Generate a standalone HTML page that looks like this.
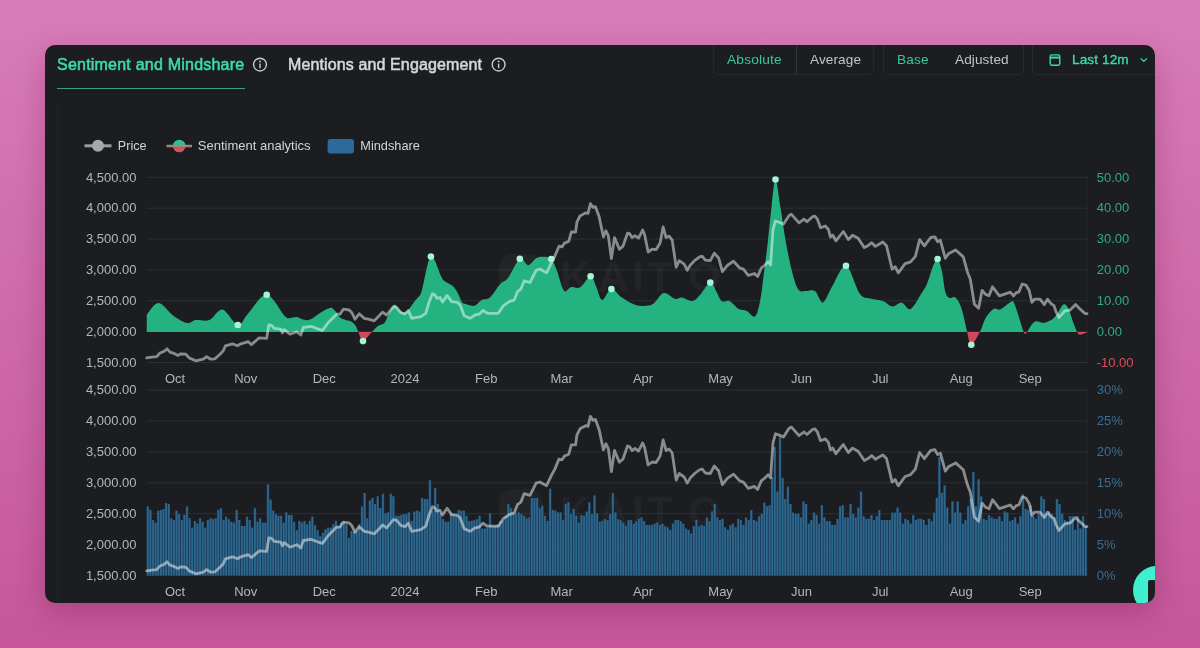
<!DOCTYPE html>
<html><head><meta charset="utf-8">
<style>
html,body{margin:0;padding:0;}
body{width:1200px;height:648px;overflow:hidden;position:relative;background:linear-gradient(180deg,#d87cb8 0%,#c5579a 100%);font-family:"Liberation Sans",sans-serif;}
.card{position:absolute;left:45px;top:45px;width:1110px;height:558px;background:#1b1d21;border-radius:10px;overflow:hidden;box-shadow:0 10px 30px rgba(90,0,50,0.25);}
.abs{position:absolute;white-space:nowrap;}
.card{will-change:transform}
</style></head><body>
<div class="card">
  <div class="abs" style="left:12px;top:61px;width:1px;height:497px;background:#212429"></div>
  <div class="abs" style="left:12px;top:10.5px;font-size:16px;font-weight:normal;color:#3ddba6;letter-spacing:0.22px;-webkit-text-stroke:0.55px #3ddba6">Sentiment and Mindshare</div>
  <div class="abs" style="left:12px;top:43px;width:188px;height:1px;background:#3a9f87"></div>
  <div class="abs" style="left:243px;top:10.5px;font-size:16px;font-weight:normal;color:#d6d7da;letter-spacing:0.12px;-webkit-text-stroke:0.55px #d6d7da">Mentions and Engagement</div>
  <div class="abs" style="left:668px;top:-6px;width:161px;height:36px;border:1px solid #26292d;border-radius:5px;box-sizing:border-box"></div>
  <div class="abs" style="left:751px;top:-6px;width:1px;height:36px;background:#34373c"></div>
  <div class="abs" style="left:682px;top:6.8px;font-size:13.7px;color:#36c99a;letter-spacing:0.2px">Absolute</div>
  <div class="abs" style="left:765px;top:6.8px;font-size:13.6px;color:#c2c4c8;letter-spacing:0.1px">Average</div>
  <div class="abs" style="left:838px;top:-6px;width:141px;height:36px;border:1px solid #26292d;border-radius:5px;box-sizing:border-box"></div>
  <div class="abs" style="left:852px;top:6.8px;font-size:13.6px;color:#36c99a;letter-spacing:0.2px">Base</div>
  <div class="abs" style="left:910px;top:6.8px;font-size:13.6px;color:#c2c4c8;letter-spacing:0.1px">Adjusted</div>
  <div class="abs" style="left:987px;top:-6px;width:140px;height:36px;border:1px solid #26292d;border-radius:5px;box-sizing:border-box"></div>
  <div class="abs" style="left:1027px;top:6.8px;font-size:13.6px;color:#3ddba6;letter-spacing:0.1px;-webkit-text-stroke:0.35px #3ddba6">Last 12m</div>
</div>
<div style="position:absolute;left:1133px;top:566px;width:22px;height:37px;overflow:hidden;border-bottom-right-radius:10px">
  <div style="position:absolute;left:0;top:0;width:48px;height:48px;border-radius:50%;background:#3ff0d0"></div>
  <div style="position:absolute;left:15px;top:14px;width:8px;height:24px;background:#1c1e22;border-radius:2px"></div>
</div>
<svg width="1200" height="648" viewBox="0 0 1200 648" style="position:absolute;left:0;top:0;will-change:transform">
<defs>
<clipPath id="cAbove"><rect x="146.5" y="100" width="940.5" height="232.0"/></clipPath>
<clipPath id="cBelow"><rect x="146.5" y="332.0" width="940.5" height="40"/></clipPath>
</defs>
<line x1="146.5" y1="177.3" x2="1088.0" y2="177.3" stroke="#2c2f35" stroke-width="1"/>
<line x1="146.5" y1="208.2" x2="1088.0" y2="208.2" stroke="#2c2f35" stroke-width="1"/>
<line x1="146.5" y1="239.0" x2="1088.0" y2="239.0" stroke="#2c2f35" stroke-width="1"/>
<line x1="146.5" y1="269.9" x2="1088.0" y2="269.9" stroke="#2c2f35" stroke-width="1"/>
<line x1="146.5" y1="300.8" x2="1088.0" y2="300.8" stroke="#2c2f35" stroke-width="1"/>
<line x1="146.5" y1="331.6" x2="1088.0" y2="331.6" stroke="#2c2f35" stroke-width="1"/>
<line x1="146.5" y1="362.5" x2="1088.0" y2="362.5" stroke="#2c2f35" stroke-width="1"/>
<line x1="146.5" y1="390.1" x2="1088.0" y2="390.1" stroke="#2c2f35" stroke-width="1"/>
<line x1="146.5" y1="421.0" x2="1088.0" y2="421.0" stroke="#2c2f35" stroke-width="1"/>
<line x1="146.5" y1="451.9" x2="1088.0" y2="451.9" stroke="#2c2f35" stroke-width="1"/>
<line x1="146.5" y1="482.8" x2="1088.0" y2="482.8" stroke="#2c2f35" stroke-width="1"/>
<line x1="146.5" y1="513.7" x2="1088.0" y2="513.7" stroke="#2c2f35" stroke-width="1"/>
<line x1="146.5" y1="544.6" x2="1088.0" y2="544.6" stroke="#2c2f35" stroke-width="1"/>
<line x1="146.5" y1="575.5" x2="1088.0" y2="575.5" stroke="#2c2f35" stroke-width="1"/>
<line x1="1087.0" y1="177.3" x2="1087.0" y2="362.5" stroke="#24272b" stroke-width="1"/>
<line x1="1087.0" y1="390.1" x2="1087.0" y2="575.5" stroke="#24272b" stroke-width="1"/>
<g fill="#ffffff" fill-opacity="0.03" font-family="Liberation Sans" font-weight="bold" font-size="42">
<rect x="499" y="254.0" width="44" height="40" rx="14"/>
<text x="560" y="291.0">K</text>
<text x="598" y="291.0">A</text>
<text x="632" y="291.0">I</text>
<text x="647" y="291.0">T</text>
<text x="688" y="291.0">O</text>
</g>
<g fill="#ffffff" fill-opacity="0.03" font-family="Liberation Sans" font-weight="bold" font-size="42">
<rect x="499" y="489.0" width="44" height="40" rx="14"/>
<text x="560" y="526.0">K</text>
<text x="598" y="526.0">A</text>
<text x="632" y="526.0">I</text>
<text x="647" y="526.0">T</text>
<text x="688" y="526.0">O</text>
</g>
<path d="M146.5,315.2 C148.5,313.2 154.0,303.0 158.5,303.1 C163.0,303.2 168.5,312.4 173.3,315.7 C178.1,319.0 183.5,322.4 187.2,323.1 C190.9,323.8 191.9,320.5 195.6,320.0 C199.3,319.5 204.9,321.7 209.4,320.0 C213.9,318.3 217.7,308.8 222.4,309.6 C227.1,310.4 233.5,324.4 237.8,325.0 C242.1,325.6 243.5,318.3 248.3,313.3 C253.1,308.3 260.6,294.3 266.7,294.8 C272.8,295.3 281.1,312.5 285.0,316.3 C288.9,320.1 288.1,317.8 290.0,317.9 C291.9,318.0 294.5,316.8 296.7,317.1 C298.9,317.4 301.1,319.2 303.3,319.6 C305.5,320.0 307.2,320.7 310.0,319.6 C312.8,318.5 316.7,314.8 320.0,312.9 C323.3,310.9 327.5,308.2 330.0,307.9 C332.5,307.5 333.3,309.2 335.0,310.8 C336.7,312.4 338.2,316.0 340.0,317.5 C341.8,319.0 343.9,319.3 345.8,320.0 C347.8,320.7 350.0,320.6 351.7,321.7 C353.4,322.8 354.8,324.6 355.9,326.3 C357.0,328.0 357.1,329.6 358.3,332.1 C359.5,334.6 360.8,341.1 363.0,341.1 C365.2,341.1 369.1,334.7 371.7,332.1 C374.2,329.6 376.2,327.3 378.3,325.8 C380.4,324.3 382.5,325.1 384.2,323.3 C385.9,321.5 386.6,318.1 388.3,315.0 C390.0,311.9 392.8,305.4 394.6,304.6 C396.4,303.8 397.6,308.7 399.2,310.0 C400.8,311.3 402.7,312.5 404.2,312.5 C405.7,312.5 406.5,311.9 408.3,310.0 C410.1,308.1 413.1,303.3 415.0,300.8 C416.9,298.3 418.7,297.2 420.0,295.0 C421.3,292.8 420.8,293.8 422.6,287.4 C424.4,281.0 427.8,258.4 430.9,256.5 C434.0,254.7 438.9,272.2 441.1,276.3 C443.3,280.4 442.3,279.2 444.2,280.8 C446.1,282.4 450.3,283.9 452.5,285.8 C454.7,287.8 456.0,289.9 457.5,292.5 C459.0,295.1 460.4,299.8 461.7,301.7 C462.9,303.6 462.9,303.1 465.0,303.8 C467.1,304.5 471.4,306.4 474.2,305.8 C477.0,305.2 479.1,301.4 481.7,300.0 C484.3,298.6 486.9,300.1 490.0,297.5 C493.1,294.9 496.9,287.5 500.0,284.2 C503.1,280.9 505.0,281.8 508.3,277.5 C511.6,273.2 516.5,260.8 519.8,258.7 C523.1,256.6 525.4,265.3 528.1,265.2 C530.8,265.1 533.7,259.7 536.2,258.3 C538.7,256.9 540.6,256.6 543.1,256.7 C545.6,256.8 549.0,256.6 551.3,259.0 C553.6,261.4 554.9,265.7 557.0,271.0 C559.1,276.3 561.7,288.0 564.0,290.7 C566.3,293.4 568.2,287.8 570.9,287.2 C573.6,286.6 576.9,289.0 580.2,287.2 C583.5,285.4 587.9,276.3 590.6,276.3 C593.3,276.3 594.5,283.2 596.4,287.2 C598.3,291.1 599.7,299.7 602.2,300.0 C604.7,300.3 608.1,289.5 611.4,289.1 C614.7,288.7 617.8,295.0 621.9,297.6 C626.0,300.2 630.7,303.8 635.7,305.0 C640.7,306.2 647.4,306.6 652.0,304.6 C656.6,302.6 659.6,294.0 663.5,293.0 C667.4,292.0 672.0,298.0 675.1,298.8 C678.2,299.6 679.1,297.2 682.0,297.6 C684.9,298.0 689.4,301.7 692.5,301.1 C695.6,300.5 697.6,297.3 700.6,294.2 C703.6,291.1 707.6,283.0 710.3,282.6 C713.0,282.2 714.7,288.9 716.6,292.0 C718.5,295.1 719.6,299.7 721.8,301.2 C724.0,302.7 726.9,299.9 729.7,301.2 C732.6,302.5 736.1,307.5 738.9,309.1 C741.7,310.7 744.0,309.8 746.7,311.0 C749.4,312.2 752.9,318.2 755.2,316.3 C757.5,314.4 758.8,307.2 760.3,299.8 C761.8,292.4 762.8,281.6 764.1,271.8 C765.4,262.0 766.6,252.2 767.9,241.2 C769.2,230.2 770.4,215.9 771.7,205.6 C773.0,195.3 774.0,179.1 775.5,179.5 C777.0,179.9 778.9,197.9 780.6,208.2 C782.3,218.5 783.8,230.6 785.7,241.2 C787.6,251.8 790.0,263.7 792.1,271.8 C794.2,279.9 796.1,286.4 798.4,289.6 C800.7,292.8 803.3,290.7 806.1,290.9 C808.9,291.1 812.2,289.1 815.0,291.0 C817.8,292.9 820.1,303.2 822.9,302.5 C825.7,301.8 828.1,292.9 832.0,286.8 C835.9,280.7 841.4,264.7 846.0,265.8 C850.6,266.9 855.6,287.9 859.6,293.4 C863.6,298.9 866.2,297.3 870.1,298.6 C874.0,299.9 879.5,299.9 883.2,301.2 C886.9,302.5 889.3,306.3 892.4,306.5 C895.5,306.7 898.6,302.1 901.6,302.5 C904.6,302.9 907.2,310.6 910.6,309.0 C914.0,307.4 918.9,297.4 921.7,293.1 C924.5,288.8 925.4,287.7 927.2,283.3 C929.1,278.9 931.1,270.8 932.8,266.7 C934.5,262.6 936.1,258.3 937.6,259.0 C939.1,259.7 940.5,265.4 941.8,270.8 C943.1,276.2 944.0,287.2 945.3,291.7 C946.6,296.2 947.8,297.0 949.4,297.9 C951.0,298.8 953.2,296.1 955.0,297.2 C956.8,298.2 958.5,301.2 959.9,304.2 C961.3,307.2 962.1,310.4 963.3,315.0 C964.5,319.6 965.8,326.9 967.1,331.9 C968.4,336.8 969.2,344.7 971.3,344.7 C973.4,344.7 977.5,336.3 979.9,331.9 C982.3,327.4 983.3,321.9 985.6,318.0 C987.9,314.1 991.4,310.2 993.8,308.8 C996.2,307.4 997.2,310.5 1000.0,309.4 C1002.8,308.2 1008.5,303.0 1010.8,301.9 C1013.1,300.8 1012.7,300.6 1014.0,302.9 C1015.3,305.1 1016.8,310.5 1018.4,315.4 C1020.0,320.3 1022.6,329.1 1023.8,332.1 C1025.0,335.2 1024.9,333.7 1025.4,333.7 C1025.9,333.7 1025.5,334.1 1027.0,332.1 C1028.5,330.1 1031.9,323.3 1034.6,321.8 C1037.3,320.3 1040.7,323.1 1043.2,322.9 C1045.7,322.7 1047.5,322.1 1049.7,320.8 C1051.9,319.6 1054.0,318.1 1056.2,315.4 C1058.5,312.7 1061.2,305.9 1063.2,304.6 C1065.2,303.3 1066.3,304.8 1068.0,307.8 C1069.7,310.9 1071.9,318.8 1073.4,322.9 C1074.9,326.9 1076.1,330.1 1077.2,332.1 C1078.3,334.1 1078.3,334.7 1079.9,334.8 C1081.5,334.9 1085.8,333.0 1087.0,332.6 L1087.0,332.0 L146.5,332.0 Z" fill="#24b281" clip-path="url(#cAbove)"/>
<path d="M146.5,315.2 C148.5,313.2 154.0,303.0 158.5,303.1 C163.0,303.2 168.5,312.4 173.3,315.7 C178.1,319.0 183.5,322.4 187.2,323.1 C190.9,323.8 191.9,320.5 195.6,320.0 C199.3,319.5 204.9,321.7 209.4,320.0 C213.9,318.3 217.7,308.8 222.4,309.6 C227.1,310.4 233.5,324.4 237.8,325.0 C242.1,325.6 243.5,318.3 248.3,313.3 C253.1,308.3 260.6,294.3 266.7,294.8 C272.8,295.3 281.1,312.5 285.0,316.3 C288.9,320.1 288.1,317.8 290.0,317.9 C291.9,318.0 294.5,316.8 296.7,317.1 C298.9,317.4 301.1,319.2 303.3,319.6 C305.5,320.0 307.2,320.7 310.0,319.6 C312.8,318.5 316.7,314.8 320.0,312.9 C323.3,310.9 327.5,308.2 330.0,307.9 C332.5,307.5 333.3,309.2 335.0,310.8 C336.7,312.4 338.2,316.0 340.0,317.5 C341.8,319.0 343.9,319.3 345.8,320.0 C347.8,320.7 350.0,320.6 351.7,321.7 C353.4,322.8 354.8,324.6 355.9,326.3 C357.0,328.0 357.1,329.6 358.3,332.1 C359.5,334.6 360.8,341.1 363.0,341.1 C365.2,341.1 369.1,334.7 371.7,332.1 C374.2,329.6 376.2,327.3 378.3,325.8 C380.4,324.3 382.5,325.1 384.2,323.3 C385.9,321.5 386.6,318.1 388.3,315.0 C390.0,311.9 392.8,305.4 394.6,304.6 C396.4,303.8 397.6,308.7 399.2,310.0 C400.8,311.3 402.7,312.5 404.2,312.5 C405.7,312.5 406.5,311.9 408.3,310.0 C410.1,308.1 413.1,303.3 415.0,300.8 C416.9,298.3 418.7,297.2 420.0,295.0 C421.3,292.8 420.8,293.8 422.6,287.4 C424.4,281.0 427.8,258.4 430.9,256.5 C434.0,254.7 438.9,272.2 441.1,276.3 C443.3,280.4 442.3,279.2 444.2,280.8 C446.1,282.4 450.3,283.9 452.5,285.8 C454.7,287.8 456.0,289.9 457.5,292.5 C459.0,295.1 460.4,299.8 461.7,301.7 C462.9,303.6 462.9,303.1 465.0,303.8 C467.1,304.5 471.4,306.4 474.2,305.8 C477.0,305.2 479.1,301.4 481.7,300.0 C484.3,298.6 486.9,300.1 490.0,297.5 C493.1,294.9 496.9,287.5 500.0,284.2 C503.1,280.9 505.0,281.8 508.3,277.5 C511.6,273.2 516.5,260.8 519.8,258.7 C523.1,256.6 525.4,265.3 528.1,265.2 C530.8,265.1 533.7,259.7 536.2,258.3 C538.7,256.9 540.6,256.6 543.1,256.7 C545.6,256.8 549.0,256.6 551.3,259.0 C553.6,261.4 554.9,265.7 557.0,271.0 C559.1,276.3 561.7,288.0 564.0,290.7 C566.3,293.4 568.2,287.8 570.9,287.2 C573.6,286.6 576.9,289.0 580.2,287.2 C583.5,285.4 587.9,276.3 590.6,276.3 C593.3,276.3 594.5,283.2 596.4,287.2 C598.3,291.1 599.7,299.7 602.2,300.0 C604.7,300.3 608.1,289.5 611.4,289.1 C614.7,288.7 617.8,295.0 621.9,297.6 C626.0,300.2 630.7,303.8 635.7,305.0 C640.7,306.2 647.4,306.6 652.0,304.6 C656.6,302.6 659.6,294.0 663.5,293.0 C667.4,292.0 672.0,298.0 675.1,298.8 C678.2,299.6 679.1,297.2 682.0,297.6 C684.9,298.0 689.4,301.7 692.5,301.1 C695.6,300.5 697.6,297.3 700.6,294.2 C703.6,291.1 707.6,283.0 710.3,282.6 C713.0,282.2 714.7,288.9 716.6,292.0 C718.5,295.1 719.6,299.7 721.8,301.2 C724.0,302.7 726.9,299.9 729.7,301.2 C732.6,302.5 736.1,307.5 738.9,309.1 C741.7,310.7 744.0,309.8 746.7,311.0 C749.4,312.2 752.9,318.2 755.2,316.3 C757.5,314.4 758.8,307.2 760.3,299.8 C761.8,292.4 762.8,281.6 764.1,271.8 C765.4,262.0 766.6,252.2 767.9,241.2 C769.2,230.2 770.4,215.9 771.7,205.6 C773.0,195.3 774.0,179.1 775.5,179.5 C777.0,179.9 778.9,197.9 780.6,208.2 C782.3,218.5 783.8,230.6 785.7,241.2 C787.6,251.8 790.0,263.7 792.1,271.8 C794.2,279.9 796.1,286.4 798.4,289.6 C800.7,292.8 803.3,290.7 806.1,290.9 C808.9,291.1 812.2,289.1 815.0,291.0 C817.8,292.9 820.1,303.2 822.9,302.5 C825.7,301.8 828.1,292.9 832.0,286.8 C835.9,280.7 841.4,264.7 846.0,265.8 C850.6,266.9 855.6,287.9 859.6,293.4 C863.6,298.9 866.2,297.3 870.1,298.6 C874.0,299.9 879.5,299.9 883.2,301.2 C886.9,302.5 889.3,306.3 892.4,306.5 C895.5,306.7 898.6,302.1 901.6,302.5 C904.6,302.9 907.2,310.6 910.6,309.0 C914.0,307.4 918.9,297.4 921.7,293.1 C924.5,288.8 925.4,287.7 927.2,283.3 C929.1,278.9 931.1,270.8 932.8,266.7 C934.5,262.6 936.1,258.3 937.6,259.0 C939.1,259.7 940.5,265.4 941.8,270.8 C943.1,276.2 944.0,287.2 945.3,291.7 C946.6,296.2 947.8,297.0 949.4,297.9 C951.0,298.8 953.2,296.1 955.0,297.2 C956.8,298.2 958.5,301.2 959.9,304.2 C961.3,307.2 962.1,310.4 963.3,315.0 C964.5,319.6 965.8,326.9 967.1,331.9 C968.4,336.8 969.2,344.7 971.3,344.7 C973.4,344.7 977.5,336.3 979.9,331.9 C982.3,327.4 983.3,321.9 985.6,318.0 C987.9,314.1 991.4,310.2 993.8,308.8 C996.2,307.4 997.2,310.5 1000.0,309.4 C1002.8,308.2 1008.5,303.0 1010.8,301.9 C1013.1,300.8 1012.7,300.6 1014.0,302.9 C1015.3,305.1 1016.8,310.5 1018.4,315.4 C1020.0,320.3 1022.6,329.1 1023.8,332.1 C1025.0,335.2 1024.9,333.7 1025.4,333.7 C1025.9,333.7 1025.5,334.1 1027.0,332.1 C1028.5,330.1 1031.9,323.3 1034.6,321.8 C1037.3,320.3 1040.7,323.1 1043.2,322.9 C1045.7,322.7 1047.5,322.1 1049.7,320.8 C1051.9,319.6 1054.0,318.1 1056.2,315.4 C1058.5,312.7 1061.2,305.9 1063.2,304.6 C1065.2,303.3 1066.3,304.8 1068.0,307.8 C1069.7,310.9 1071.9,318.8 1073.4,322.9 C1074.9,326.9 1076.1,330.1 1077.2,332.1 C1078.3,334.1 1078.3,334.7 1079.9,334.8 C1081.5,334.9 1085.8,333.0 1087.0,332.6 L1087.0,332.0 L146.5,332.0 Z" fill="#d0495a" clip-path="url(#cBelow)"/>
<path d="M146.7,357.9 L151.7,357.1 L156.7,356.7 L159.6,353.3 L164.2,351.3 L167.1,348.8 L170.0,352.1 L173.8,353.3 L177.9,355.4 L180.8,353.8 L185.8,354.2 L189.2,357.9 L195.8,360.8 L203.3,359.2 L206.7,356.7 L210.8,359.2 L215.0,358.8 L220.0,354.2 L223.3,350.8 L225.4,345.8 L232.5,343.8 L237.5,345.8 L240.0,344.2 L248.3,341.7 L251.3,344.6 L259.2,337.9 L266.7,338.3 L268.8,325.0 L271.7,325.4 L274.2,328.3 L280.8,329.2 L282.5,332.9 L284.2,329.6 L290.0,334.2 L296.7,331.7 L300.8,335.0 L303.3,327.5 L310.8,326.3 L317.5,328.8 L322.5,330.4 L328.3,322.5 L336.7,314.2 L340.0,314.2 L343.3,309.2 L349.2,310.0 L351.7,312.5 L355.0,319.2 L359.2,313.8 L364.2,318.3 L368.3,319.2 L374.2,320.8 L379.2,315.8 L382.5,312.1 L386.7,315.0 L393.3,306.7 L396.7,307.5 L400.8,312.5 L405.0,313.8 L408.3,310.4 L411.7,318.3 L420.8,316.7 L425.8,313.3 L429.2,301.7 L432.5,293.8 L435.0,295.0 L436.7,298.3 L440.0,297.5 L442.5,302.1 L447.1,295.4 L451.7,301.7 L456.7,302.1 L460.0,304.6 L464.2,315.8 L470.0,318.3 L475.0,315.0 L479.2,314.2 L482.9,310.4 L487.5,313.3 L498.3,313.3 L503.3,305.8 L509.2,301.7 L514.2,300.0 L517.5,291.7 L520.8,289.2 L524.2,280.8 L530.0,282.5 L536.1,270.3 L539.8,269.1 L546.6,272.8 L551.5,262.3 L554.6,256.7 L559.0,246.2 L562.0,246.9 L564.5,243.1 L568.8,241.3 L571.3,232.0 L575.6,232.0 L576.9,222.2 L580.0,216.0 L585.5,212.9 L588.0,213.5 L590.4,203.6 L592.9,207.3 L595.4,206.7 L599.1,216.6 L603.4,237.0 L605.9,230.8 L608.3,235.7 L611.4,258.6 L614.5,237.6 L619.4,249.3 L623.0,246.1 L627.5,233.1 L629.5,233.6 L632.0,237.6 L635.0,235.6 L638.6,238.1 L642.6,230.0 L644.6,234.6 L648.1,252.1 L652.1,249.1 L656.1,249.6 L660.1,243.1 L663.1,227.0 L666.1,237.6 L669.1,236.1 L672.2,240.1 L676.2,267.2 L679.2,260.6 L684.2,264.1 L687.2,270.2 L690.2,265.2 L695.2,260.1 L699.2,257.1 L702.2,256.1 L705.3,260.1 L710.3,260.6 L714.3,253.1 L718.7,258.1 L722.4,271.7 L727.3,265.5 L733.5,261.2 L739.7,268.0 L743.4,269.2 L748.3,275.4 L754.5,273.5 L757.6,276.6 L761.3,268.0 L764.4,265.5 L768.1,261.8 L770.6,264.9 L773.0,229.7 L775.5,221.0 L779.2,222.3 L783.5,224.1 L789.1,215.5 L791.5,214.3 L799.0,222.9 L803.9,219.2 L807.0,221.7 L812.5,216.7 L814.9,216.1 L817.4,219.2 L820.5,227.8 L825.4,226.0 L828.5,229.7 L830.4,237.1 L832.8,235.2 L835.9,240.8 L843.3,231.5 L848.3,239.6 L852.6,235.2 L858.1,238.3 L864.3,247.6 L868.0,245.7 L871.7,242.7 L875.4,246.4 L882.8,242.0 L886.5,245.7 L892.1,269.2 L895.2,266.7 L898.3,272.9 L905.1,263.6 L910.6,261.8 L915.4,256.3 L919.6,239.6 L924.4,245.8 L930.7,237.5 L934.9,236.8 L937.6,241.7 L940.4,240.3 L945.3,258.3 L948.8,253.5 L955.7,250.0 L963.3,256.9 L967.5,272.2 L970.3,279.2 L974.4,304.2 L978.6,308.3 L982.1,290.3 L985.6,294.4 L989.0,295.8 L992.5,286.8 L999.4,295.8 L1005.4,293.8 L1010.3,292.1 L1013.5,295.9 L1016.2,292.7 L1018.9,292.1 L1022.1,284.0 L1025.9,285.1 L1029.2,290.5 L1031.9,302.4 L1034.6,299.2 L1040.0,299.2 L1044.3,304.6 L1047.5,299.2 L1050.8,303.5 L1054.0,305.6 L1056.2,312.1 L1058.9,317.5 L1064.8,311.0 L1070.2,310.0 L1075.6,304.6 L1079.9,308.9 L1085.3,313.7 L1087.0,313.7" fill="none" stroke="#ffffff" stroke-opacity="0.49" stroke-width="2.8" stroke-linejoin="round" stroke-linecap="round"/>
<circle cx="237.8" cy="325" r="3.3" fill="#a6f3d6"/>
<circle cx="266.7" cy="294.8" r="3.3" fill="#a6f3d6"/>
<circle cx="363" cy="341.1" r="3.3" fill="#a6f3d6"/>
<circle cx="430.9" cy="256.5" r="3.3" fill="#a6f3d6"/>
<circle cx="519.8" cy="258.7" r="3.3" fill="#a6f3d6"/>
<circle cx="551.3" cy="259" r="3.3" fill="#a6f3d6"/>
<circle cx="590.6" cy="276.3" r="3.3" fill="#a6f3d6"/>
<circle cx="611.4" cy="289.1" r="3.3" fill="#a6f3d6"/>
<circle cx="710.3" cy="282.6" r="3.3" fill="#a6f3d6"/>
<circle cx="775.5" cy="179.5" r="3.3" fill="#a6f3d6"/>
<circle cx="846" cy="265.8" r="3.3" fill="#a6f3d6"/>
<circle cx="937.6" cy="259" r="3.3" fill="#a6f3d6"/>
<circle cx="971.3" cy="344.7" r="3.3" fill="#a6f3d6"/>
<g fill="#1a4466"><rect x="146.50" y="506.5" width="2.61" height="69.0"/><rect x="149.11" y="509.9" width="2.61" height="65.6"/><rect x="151.72" y="520.0" width="2.61" height="55.5"/><rect x="154.34" y="522.6" width="2.61" height="52.9"/><rect x="156.95" y="510.7" width="2.61" height="64.8"/><rect x="159.56" y="509.9" width="2.61" height="65.6"/><rect x="162.18" y="509.0" width="2.61" height="66.5"/><rect x="164.79" y="503.1" width="2.61" height="72.4"/><rect x="167.40" y="504.0" width="2.61" height="71.5"/><rect x="170.01" y="518.4" width="2.61" height="57.1"/><rect x="172.62" y="520.0" width="2.61" height="55.5"/><rect x="175.24" y="510.7" width="2.61" height="64.8"/><rect x="177.85" y="514.1" width="2.61" height="61.4"/><rect x="180.46" y="520.0" width="2.61" height="55.5"/><rect x="183.07" y="515.0" width="2.61" height="60.5"/><rect x="185.69" y="506.5" width="2.61" height="69.0"/><rect x="188.30" y="518.4" width="2.61" height="57.1"/><rect x="190.91" y="527.7" width="2.61" height="47.8"/><rect x="193.53" y="520.9" width="2.61" height="54.6"/><rect x="196.14" y="523.5" width="2.61" height="52.0"/><rect x="198.75" y="518.4" width="2.61" height="57.1"/><rect x="201.36" y="521.8" width="2.61" height="53.7"/><rect x="203.97" y="527.7" width="2.61" height="47.8"/><rect x="206.59" y="520.0" width="2.61" height="55.5"/><rect x="209.20" y="518.4" width="2.61" height="57.1"/><rect x="211.81" y="519.2" width="2.61" height="56.3"/><rect x="214.43" y="518.4" width="2.61" height="57.1"/><rect x="217.04" y="509.9" width="2.61" height="65.6"/><rect x="219.65" y="508.2" width="2.61" height="67.3"/><rect x="222.26" y="520.0" width="2.61" height="55.5"/><rect x="224.88" y="516.7" width="2.61" height="58.8"/><rect x="227.49" y="519.2" width="2.61" height="56.3"/><rect x="230.10" y="521.8" width="2.61" height="53.7"/><rect x="232.71" y="522.6" width="2.61" height="52.9"/><rect x="235.32" y="509.9" width="2.61" height="65.6"/><rect x="237.94" y="520.0" width="2.61" height="55.5"/><rect x="240.55" y="526.0" width="2.61" height="49.5"/><rect x="243.16" y="526.0" width="2.61" height="49.5"/><rect x="245.77" y="516.7" width="2.61" height="58.8"/><rect x="248.39" y="520.0" width="2.61" height="55.5"/><rect x="251.00" y="527.7" width="2.61" height="47.8"/><rect x="253.61" y="508.2" width="2.61" height="67.3"/><rect x="256.23" y="521.8" width="2.61" height="53.7"/><rect x="258.84" y="518.4" width="2.61" height="57.1"/><rect x="261.45" y="522.6" width="2.61" height="52.9"/><rect x="264.06" y="522.6" width="2.61" height="52.9"/><rect x="266.68" y="484.4" width="2.61" height="91.1"/><rect x="269.29" y="499.7" width="2.61" height="75.8"/><rect x="271.90" y="510.7" width="2.61" height="64.8"/><rect x="274.51" y="514.1" width="2.61" height="61.4"/><rect x="277.12" y="515.8" width="2.61" height="59.7"/><rect x="279.74" y="515.8" width="2.61" height="59.7"/><rect x="282.35" y="522.6" width="2.61" height="52.9"/><rect x="284.96" y="512.4" width="2.61" height="63.1"/><rect x="287.57" y="515.0" width="2.61" height="60.5"/><rect x="290.19" y="515.0" width="2.61" height="60.5"/><rect x="292.80" y="521.8" width="2.61" height="53.7"/><rect x="295.41" y="530.3" width="2.61" height="45.2"/><rect x="298.02" y="520.9" width="2.61" height="54.6"/><rect x="300.64" y="522.6" width="2.61" height="52.9"/><rect x="303.25" y="520.9" width="2.61" height="54.6"/><rect x="305.86" y="524.3" width="2.61" height="51.2"/><rect x="308.48" y="520.9" width="2.61" height="54.6"/><rect x="311.09" y="516.7" width="2.61" height="58.8"/><rect x="313.70" y="525.2" width="2.61" height="50.3"/><rect x="316.31" y="530.3" width="2.61" height="45.2"/><rect x="318.92" y="536.2" width="2.61" height="39.3"/><rect x="321.54" y="532.8" width="2.61" height="42.7"/><rect x="324.15" y="529.4" width="2.61" height="46.1"/><rect x="326.76" y="527.7" width="2.61" height="47.8"/><rect x="329.38" y="527.7" width="2.61" height="47.8"/><rect x="331.99" y="524.3" width="2.61" height="51.2"/><rect x="334.60" y="520.9" width="2.61" height="54.6"/><rect x="337.21" y="526.0" width="2.61" height="49.5"/><rect x="339.82" y="522.6" width="2.61" height="52.9"/><rect x="342.44" y="521.8" width="2.61" height="53.7"/><rect x="345.05" y="524.3" width="2.61" height="51.2"/><rect x="347.66" y="537.9" width="2.61" height="37.6"/><rect x="350.27" y="531.1" width="2.61" height="44.4"/><rect x="352.89" y="531.1" width="2.61" height="44.4"/><rect x="355.50" y="531.1" width="2.61" height="44.4"/><rect x="358.11" y="524.3" width="2.61" height="51.2"/><rect x="360.73" y="506.5" width="2.61" height="69.0"/><rect x="363.34" y="492.9" width="2.61" height="82.6"/><rect x="365.95" y="518.4" width="2.61" height="57.1"/><rect x="368.56" y="500.6" width="2.61" height="74.9"/><rect x="371.17" y="498.0" width="2.61" height="77.5"/><rect x="373.79" y="504.0" width="2.61" height="71.5"/><rect x="376.40" y="496.3" width="2.61" height="79.2"/><rect x="379.01" y="508.2" width="2.61" height="67.3"/><rect x="381.62" y="493.8" width="2.61" height="81.7"/><rect x="384.24" y="513.3" width="2.61" height="62.2"/><rect x="386.85" y="512.4" width="2.61" height="63.1"/><rect x="389.46" y="493.8" width="2.61" height="81.7"/><rect x="392.07" y="496.3" width="2.61" height="79.2"/><rect x="394.69" y="515.8" width="2.61" height="59.7"/><rect x="397.30" y="515.8" width="2.61" height="59.7"/><rect x="399.91" y="515.0" width="2.61" height="60.5"/><rect x="402.52" y="514.1" width="2.61" height="61.4"/><rect x="405.14" y="514.1" width="2.61" height="61.4"/><rect x="407.75" y="512.4" width="2.61" height="63.1"/><rect x="410.36" y="520.9" width="2.61" height="54.6"/><rect x="412.97" y="511.6" width="2.61" height="63.9"/><rect x="415.59" y="510.7" width="2.61" height="64.8"/><rect x="418.20" y="511.6" width="2.61" height="63.9"/><rect x="420.81" y="498.0" width="2.61" height="77.5"/><rect x="423.42" y="498.9" width="2.61" height="76.6"/><rect x="426.04" y="498.9" width="2.61" height="76.6"/><rect x="428.65" y="480.2" width="2.61" height="95.3"/><rect x="431.26" y="510.7" width="2.61" height="64.8"/><rect x="433.88" y="487.8" width="2.61" height="87.7"/><rect x="436.49" y="504.0" width="2.61" height="71.5"/><rect x="439.10" y="513.3" width="2.61" height="62.2"/><rect x="441.71" y="519.2" width="2.61" height="56.3"/><rect x="444.32" y="521.8" width="2.61" height="53.7"/><rect x="446.94" y="521.8" width="2.61" height="53.7"/><rect x="449.55" y="513.3" width="2.61" height="62.2"/><rect x="452.16" y="514.1" width="2.61" height="61.4"/><rect x="454.77" y="515.8" width="2.61" height="59.7"/><rect x="457.39" y="509.9" width="2.61" height="65.6"/><rect x="460.00" y="510.7" width="2.61" height="64.8"/><rect x="462.61" y="510.7" width="2.61" height="64.8"/><rect x="465.22" y="515.8" width="2.61" height="59.7"/><rect x="467.84" y="520.9" width="2.61" height="54.6"/><rect x="470.45" y="520.9" width="2.61" height="54.6"/><rect x="473.06" y="520.1" width="2.61" height="55.4"/><rect x="475.67" y="519.2" width="2.61" height="56.3"/><rect x="478.29" y="515.8" width="2.61" height="59.7"/><rect x="480.90" y="528.6" width="2.61" height="46.9"/><rect x="483.51" y="528.6" width="2.61" height="46.9"/><rect x="486.12" y="527.7" width="2.61" height="47.8"/><rect x="488.74" y="513.3" width="2.61" height="62.2"/><rect x="491.35" y="526.0" width="2.61" height="49.5"/><rect x="493.96" y="526.0" width="2.61" height="49.5"/><rect x="496.57" y="524.3" width="2.61" height="51.2"/><rect x="499.19" y="520.9" width="2.61" height="54.6"/><rect x="501.80" y="520.9" width="2.61" height="54.6"/><rect x="504.41" y="515.8" width="2.61" height="59.7"/><rect x="507.02" y="504.0" width="2.61" height="71.5"/><rect x="509.64" y="508.2" width="2.61" height="67.3"/><rect x="512.25" y="513.3" width="2.61" height="62.2"/><rect x="514.86" y="513.3" width="2.61" height="62.2"/><rect x="517.47" y="512.4" width="2.61" height="63.1"/><rect x="520.09" y="514.1" width="2.61" height="61.4"/><rect x="522.70" y="515.8" width="2.61" height="59.7"/><rect x="525.31" y="518.4" width="2.61" height="57.1"/><rect x="527.92" y="517.5" width="2.61" height="58.0"/><rect x="530.54" y="498.0" width="2.61" height="77.5"/><rect x="533.15" y="498.0" width="2.61" height="77.5"/><rect x="535.76" y="498.0" width="2.61" height="77.5"/><rect x="538.38" y="508.2" width="2.61" height="67.3"/><rect x="540.99" y="505.7" width="2.61" height="69.8"/><rect x="543.60" y="515.8" width="2.61" height="59.7"/><rect x="546.21" y="520.9" width="2.61" height="54.6"/><rect x="548.83" y="488.7" width="2.61" height="86.8"/><rect x="551.44" y="509.9" width="2.61" height="65.6"/><rect x="554.05" y="510.7" width="2.61" height="64.8"/><rect x="556.66" y="512.4" width="2.61" height="63.1"/><rect x="559.27" y="512.4" width="2.61" height="63.1"/><rect x="561.89" y="520.1" width="2.61" height="55.4"/><rect x="564.50" y="504.0" width="2.61" height="71.5"/><rect x="567.11" y="502.3" width="2.61" height="73.2"/><rect x="569.72" y="514.1" width="2.61" height="61.4"/><rect x="572.34" y="509.0" width="2.61" height="66.5"/><rect x="574.95" y="515.8" width="2.61" height="59.7"/><rect x="577.56" y="522.6" width="2.61" height="52.9"/><rect x="580.17" y="515.0" width="2.61" height="60.5"/><rect x="582.79" y="515.8" width="2.61" height="59.7"/><rect x="585.40" y="511.6" width="2.61" height="63.9"/><rect x="588.01" y="502.3" width="2.61" height="73.2"/><rect x="590.62" y="514.1" width="2.61" height="61.4"/><rect x="593.24" y="495.5" width="2.61" height="80.0"/><rect x="595.85" y="513.3" width="2.61" height="62.2"/><rect x="598.46" y="521.8" width="2.61" height="53.7"/><rect x="601.08" y="520.9" width="2.61" height="54.6"/><rect x="603.69" y="519.2" width="2.61" height="56.3"/><rect x="606.30" y="520.1" width="2.61" height="55.4"/><rect x="608.91" y="514.1" width="2.61" height="61.4"/><rect x="611.52" y="492.9" width="2.61" height="82.6"/><rect x="614.14" y="512.4" width="2.61" height="63.1"/><rect x="616.75" y="519.2" width="2.61" height="56.3"/><rect x="619.36" y="520.1" width="2.61" height="55.4"/><rect x="621.97" y="522.6" width="2.61" height="52.9"/><rect x="624.59" y="526.0" width="2.61" height="49.5"/><rect x="627.20" y="520.1" width="2.61" height="55.4"/><rect x="629.81" y="520.0" width="2.61" height="55.5"/><rect x="632.42" y="523.7" width="2.61" height="51.8"/><rect x="635.04" y="521.2" width="2.61" height="54.3"/><rect x="637.65" y="518.8" width="2.61" height="56.7"/><rect x="640.26" y="517.5" width="2.61" height="58.0"/><rect x="642.88" y="521.2" width="2.61" height="54.3"/><rect x="645.49" y="524.9" width="2.61" height="50.6"/><rect x="648.10" y="524.9" width="2.61" height="50.6"/><rect x="650.71" y="524.9" width="2.61" height="50.6"/><rect x="653.33" y="523.7" width="2.61" height="51.8"/><rect x="655.94" y="522.5" width="2.61" height="53.0"/><rect x="658.55" y="524.9" width="2.61" height="50.6"/><rect x="661.16" y="523.7" width="2.61" height="51.8"/><rect x="663.77" y="526.2" width="2.61" height="49.3"/><rect x="666.39" y="527.4" width="2.61" height="48.1"/><rect x="669.00" y="529.9" width="2.61" height="45.6"/><rect x="671.61" y="523.7" width="2.61" height="51.8"/><rect x="674.22" y="520.0" width="2.61" height="55.5"/><rect x="676.84" y="520.0" width="2.61" height="55.5"/><rect x="679.45" y="521.2" width="2.61" height="54.3"/><rect x="682.06" y="523.7" width="2.61" height="51.8"/><rect x="684.67" y="528.6" width="2.61" height="46.9"/><rect x="687.29" y="529.9" width="2.61" height="45.6"/><rect x="689.90" y="533.6" width="2.61" height="41.9"/><rect x="692.51" y="526.2" width="2.61" height="49.3"/><rect x="695.12" y="520.0" width="2.61" height="55.5"/><rect x="697.74" y="526.2" width="2.61" height="49.3"/><rect x="700.35" y="524.9" width="2.61" height="50.6"/><rect x="702.96" y="526.2" width="2.61" height="49.3"/><rect x="705.57" y="517.5" width="2.61" height="58.0"/><rect x="708.19" y="521.2" width="2.61" height="54.3"/><rect x="710.80" y="511.4" width="2.61" height="64.1"/><rect x="713.41" y="504.0" width="2.61" height="71.5"/><rect x="716.02" y="517.5" width="2.61" height="58.0"/><rect x="718.64" y="520.0" width="2.61" height="55.5"/><rect x="721.25" y="518.8" width="2.61" height="56.7"/><rect x="723.86" y="527.4" width="2.61" height="48.1"/><rect x="726.47" y="529.9" width="2.61" height="45.6"/><rect x="729.09" y="524.9" width="2.61" height="50.6"/><rect x="731.70" y="523.7" width="2.61" height="51.8"/><rect x="734.31" y="527.4" width="2.61" height="48.1"/><rect x="736.92" y="518.8" width="2.61" height="56.7"/><rect x="739.54" y="520.0" width="2.61" height="55.5"/><rect x="742.15" y="524.9" width="2.61" height="50.6"/><rect x="744.76" y="517.5" width="2.61" height="58.0"/><rect x="747.38" y="520.0" width="2.61" height="55.5"/><rect x="749.99" y="510.1" width="2.61" height="65.4"/><rect x="752.60" y="520.0" width="2.61" height="55.5"/><rect x="755.21" y="521.2" width="2.61" height="54.3"/><rect x="757.82" y="516.3" width="2.61" height="59.2"/><rect x="760.44" y="513.8" width="2.61" height="61.7"/><rect x="763.05" y="502.7" width="2.61" height="72.8"/><rect x="765.66" y="506.4" width="2.61" height="69.1"/><rect x="768.27" y="505.2" width="2.61" height="70.3"/><rect x="770.89" y="476.8" width="2.61" height="98.7"/><rect x="773.50" y="447.2" width="2.61" height="128.3"/><rect x="776.11" y="491.6" width="2.61" height="83.9"/><rect x="778.72" y="437.3" width="2.61" height="138.2"/><rect x="781.34" y="478.0" width="2.61" height="97.5"/><rect x="783.95" y="499.0" width="2.61" height="76.5"/><rect x="786.56" y="486.7" width="2.61" height="88.8"/><rect x="789.17" y="504.0" width="2.61" height="71.5"/><rect x="791.79" y="512.6" width="2.61" height="62.9"/><rect x="794.40" y="513.8" width="2.61" height="61.7"/><rect x="797.01" y="513.8" width="2.61" height="61.7"/><rect x="799.62" y="517.5" width="2.61" height="58.0"/><rect x="802.24" y="501.5" width="2.61" height="74.0"/><rect x="804.85" y="504.0" width="2.61" height="71.5"/><rect x="807.46" y="523.7" width="2.61" height="51.8"/><rect x="810.07" y="520.0" width="2.61" height="55.5"/><rect x="812.69" y="512.6" width="2.61" height="62.9"/><rect x="815.30" y="515.1" width="2.61" height="60.4"/><rect x="817.91" y="523.7" width="2.61" height="51.8"/><rect x="820.52" y="505.2" width="2.61" height="70.3"/><rect x="823.14" y="517.5" width="2.61" height="58.0"/><rect x="825.75" y="521.2" width="2.61" height="54.3"/><rect x="828.36" y="521.2" width="2.61" height="54.3"/><rect x="830.97" y="524.9" width="2.61" height="50.6"/><rect x="833.59" y="524.9" width="2.61" height="50.6"/><rect x="836.20" y="518.8" width="2.61" height="56.7"/><rect x="838.81" y="506.4" width="2.61" height="69.1"/><rect x="841.42" y="505.2" width="2.61" height="70.3"/><rect x="844.04" y="517.5" width="2.61" height="58.0"/><rect x="846.65" y="517.5" width="2.61" height="58.0"/><rect x="849.26" y="504.0" width="2.61" height="71.5"/><rect x="851.88" y="513.8" width="2.61" height="61.7"/><rect x="854.49" y="517.5" width="2.61" height="58.0"/><rect x="857.10" y="507.7" width="2.61" height="67.8"/><rect x="859.71" y="491.6" width="2.61" height="83.9"/><rect x="862.32" y="516.3" width="2.61" height="59.2"/><rect x="864.94" y="518.8" width="2.61" height="56.7"/><rect x="867.55" y="518.8" width="2.61" height="56.7"/><rect x="870.16" y="515.1" width="2.61" height="60.4"/><rect x="872.77" y="520.0" width="2.61" height="55.5"/><rect x="875.39" y="516.3" width="2.61" height="59.2"/><rect x="878.00" y="510.1" width="2.61" height="65.4"/><rect x="880.61" y="520.0" width="2.61" height="55.5"/><rect x="883.22" y="520.0" width="2.61" height="55.5"/><rect x="885.84" y="520.0" width="2.61" height="55.5"/><rect x="888.45" y="520.0" width="2.61" height="55.5"/><rect x="891.06" y="512.6" width="2.61" height="62.9"/><rect x="893.67" y="512.6" width="2.61" height="62.9"/><rect x="896.29" y="507.7" width="2.61" height="67.8"/><rect x="898.90" y="512.6" width="2.61" height="62.9"/><rect x="901.51" y="523.7" width="2.61" height="51.8"/><rect x="904.12" y="518.8" width="2.61" height="56.7"/><rect x="906.74" y="520.0" width="2.61" height="55.5"/><rect x="909.35" y="523.7" width="2.61" height="51.8"/><rect x="911.96" y="515.1" width="2.61" height="60.4"/><rect x="914.57" y="520.0" width="2.61" height="55.5"/><rect x="917.19" y="518.8" width="2.61" height="56.7"/><rect x="919.80" y="518.8" width="2.61" height="56.7"/><rect x="922.41" y="520.0" width="2.61" height="55.5"/><rect x="925.02" y="524.9" width="2.61" height="50.6"/><rect x="927.64" y="518.8" width="2.61" height="56.7"/><rect x="930.25" y="521.2" width="2.61" height="54.3"/><rect x="932.86" y="512.6" width="2.61" height="62.9"/><rect x="935.47" y="497.8" width="2.61" height="77.7"/><rect x="938.09" y="457.0" width="2.61" height="118.5"/><rect x="940.70" y="492.8" width="2.61" height="82.7"/><rect x="943.31" y="485.4" width="2.61" height="90.1"/><rect x="945.92" y="507.7" width="2.61" height="67.8"/><rect x="948.54" y="523.7" width="2.61" height="51.8"/><rect x="951.15" y="501.5" width="2.61" height="74.0"/><rect x="953.76" y="512.6" width="2.61" height="62.9"/><rect x="956.38" y="501.5" width="2.61" height="74.0"/><rect x="958.99" y="512.6" width="2.61" height="62.9"/><rect x="961.60" y="523.7" width="2.61" height="51.8"/><rect x="964.21" y="520.0" width="2.61" height="55.5"/><rect x="966.82" y="506.4" width="2.61" height="69.1"/><rect x="969.44" y="499.0" width="2.61" height="76.5"/><rect x="972.05" y="471.9" width="2.61" height="103.6"/><rect x="974.66" y="506.4" width="2.61" height="69.1"/><rect x="977.27" y="479.3" width="2.61" height="96.2"/><rect x="979.89" y="496.5" width="2.61" height="79.0"/><rect x="982.50" y="518.8" width="2.61" height="56.7"/><rect x="985.11" y="520.0" width="2.61" height="55.5"/><rect x="987.72" y="515.1" width="2.61" height="60.4"/><rect x="990.34" y="517.5" width="2.61" height="58.0"/><rect x="992.95" y="518.8" width="2.61" height="56.7"/><rect x="995.56" y="518.8" width="2.61" height="56.7"/><rect x="998.17" y="516.3" width="2.61" height="59.2"/><rect x="1000.79" y="521.2" width="2.61" height="54.3"/><rect x="1003.40" y="511.4" width="2.61" height="64.1"/><rect x="1006.01" y="512.6" width="2.61" height="62.9"/><rect x="1008.62" y="521.2" width="2.61" height="54.3"/><rect x="1011.24" y="520.0" width="2.61" height="55.5"/><rect x="1013.85" y="517.5" width="2.61" height="58.0"/><rect x="1016.46" y="523.7" width="2.61" height="51.8"/><rect x="1019.07" y="516.3" width="2.61" height="59.2"/><rect x="1021.69" y="494.1" width="2.61" height="81.4"/><rect x="1024.30" y="508.9" width="2.61" height="66.6"/><rect x="1026.91" y="510.1" width="2.61" height="65.4"/><rect x="1029.53" y="505.2" width="2.61" height="70.3"/><rect x="1032.14" y="516.3" width="2.61" height="59.2"/><rect x="1034.75" y="518.8" width="2.61" height="56.7"/><rect x="1037.36" y="513.8" width="2.61" height="61.7"/><rect x="1039.97" y="496.5" width="2.61" height="79.0"/><rect x="1042.59" y="499.0" width="2.61" height="76.5"/><rect x="1045.20" y="513.8" width="2.61" height="61.7"/><rect x="1047.81" y="511.4" width="2.61" height="64.1"/><rect x="1050.42" y="513.8" width="2.61" height="61.7"/><rect x="1053.04" y="517.5" width="2.61" height="58.0"/><rect x="1055.65" y="499.0" width="2.61" height="76.5"/><rect x="1058.26" y="504.0" width="2.61" height="71.5"/><rect x="1060.88" y="513.8" width="2.61" height="61.7"/><rect x="1063.49" y="520.0" width="2.61" height="55.5"/><rect x="1066.10" y="521.2" width="2.61" height="54.3"/><rect x="1068.71" y="516.3" width="2.61" height="59.2"/><rect x="1071.32" y="516.3" width="2.61" height="59.2"/><rect x="1073.94" y="529.9" width="2.61" height="45.6"/><rect x="1076.55" y="516.3" width="2.61" height="59.2"/><rect x="1079.16" y="528.6" width="2.61" height="46.9"/><rect x="1081.78" y="516.3" width="2.61" height="59.2"/><rect x="1084.39" y="526.2" width="2.61" height="49.3"/></g>
<g fill="#30678c"><rect x="146.95" y="506.5" width="1.71" height="69.0"/><rect x="149.56" y="509.9" width="1.71" height="65.6"/><rect x="152.17" y="520.0" width="1.71" height="55.5"/><rect x="154.79" y="522.6" width="1.71" height="52.9"/><rect x="157.40" y="510.7" width="1.71" height="64.8"/><rect x="160.01" y="509.9" width="1.71" height="65.6"/><rect x="162.62" y="509.0" width="1.71" height="66.5"/><rect x="165.24" y="503.1" width="1.71" height="72.4"/><rect x="167.85" y="504.0" width="1.71" height="71.5"/><rect x="170.46" y="518.4" width="1.71" height="57.1"/><rect x="173.07" y="520.0" width="1.71" height="55.5"/><rect x="175.69" y="510.7" width="1.71" height="64.8"/><rect x="178.30" y="514.1" width="1.71" height="61.4"/><rect x="180.91" y="520.0" width="1.71" height="55.5"/><rect x="183.52" y="515.0" width="1.71" height="60.5"/><rect x="186.14" y="506.5" width="1.71" height="69.0"/><rect x="188.75" y="518.4" width="1.71" height="57.1"/><rect x="191.36" y="527.7" width="1.71" height="47.8"/><rect x="193.97" y="520.9" width="1.71" height="54.6"/><rect x="196.59" y="523.5" width="1.71" height="52.0"/><rect x="199.20" y="518.4" width="1.71" height="57.1"/><rect x="201.81" y="521.8" width="1.71" height="53.7"/><rect x="204.42" y="527.7" width="1.71" height="47.8"/><rect x="207.04" y="520.0" width="1.71" height="55.5"/><rect x="209.65" y="518.4" width="1.71" height="57.1"/><rect x="212.26" y="519.2" width="1.71" height="56.3"/><rect x="214.88" y="518.4" width="1.71" height="57.1"/><rect x="217.49" y="509.9" width="1.71" height="65.6"/><rect x="220.10" y="508.2" width="1.71" height="67.3"/><rect x="222.71" y="520.0" width="1.71" height="55.5"/><rect x="225.32" y="516.7" width="1.71" height="58.8"/><rect x="227.94" y="519.2" width="1.71" height="56.3"/><rect x="230.55" y="521.8" width="1.71" height="53.7"/><rect x="233.16" y="522.6" width="1.71" height="52.9"/><rect x="235.77" y="509.9" width="1.71" height="65.6"/><rect x="238.39" y="520.0" width="1.71" height="55.5"/><rect x="241.00" y="526.0" width="1.71" height="49.5"/><rect x="243.61" y="526.0" width="1.71" height="49.5"/><rect x="246.22" y="516.7" width="1.71" height="58.8"/><rect x="248.84" y="520.0" width="1.71" height="55.5"/><rect x="251.45" y="527.7" width="1.71" height="47.8"/><rect x="254.06" y="508.2" width="1.71" height="67.3"/><rect x="256.68" y="521.8" width="1.71" height="53.7"/><rect x="259.29" y="518.4" width="1.71" height="57.1"/><rect x="261.90" y="522.6" width="1.71" height="52.9"/><rect x="264.51" y="522.6" width="1.71" height="52.9"/><rect x="267.12" y="484.4" width="1.71" height="91.1"/><rect x="269.74" y="499.7" width="1.71" height="75.8"/><rect x="272.35" y="510.7" width="1.71" height="64.8"/><rect x="274.96" y="514.1" width="1.71" height="61.4"/><rect x="277.57" y="515.8" width="1.71" height="59.7"/><rect x="280.19" y="515.8" width="1.71" height="59.7"/><rect x="282.80" y="522.6" width="1.71" height="52.9"/><rect x="285.41" y="512.4" width="1.71" height="63.1"/><rect x="288.02" y="515.0" width="1.71" height="60.5"/><rect x="290.64" y="515.0" width="1.71" height="60.5"/><rect x="293.25" y="521.8" width="1.71" height="53.7"/><rect x="295.86" y="530.3" width="1.71" height="45.2"/><rect x="298.47" y="520.9" width="1.71" height="54.6"/><rect x="301.09" y="522.6" width="1.71" height="52.9"/><rect x="303.70" y="520.9" width="1.71" height="54.6"/><rect x="306.31" y="524.3" width="1.71" height="51.2"/><rect x="308.93" y="520.9" width="1.71" height="54.6"/><rect x="311.54" y="516.7" width="1.71" height="58.8"/><rect x="314.15" y="525.2" width="1.71" height="50.3"/><rect x="316.76" y="530.3" width="1.71" height="45.2"/><rect x="319.37" y="536.2" width="1.71" height="39.3"/><rect x="321.99" y="532.8" width="1.71" height="42.7"/><rect x="324.60" y="529.4" width="1.71" height="46.1"/><rect x="327.21" y="527.7" width="1.71" height="47.8"/><rect x="329.82" y="527.7" width="1.71" height="47.8"/><rect x="332.44" y="524.3" width="1.71" height="51.2"/><rect x="335.05" y="520.9" width="1.71" height="54.6"/><rect x="337.66" y="526.0" width="1.71" height="49.5"/><rect x="340.27" y="522.6" width="1.71" height="52.9"/><rect x="342.89" y="521.8" width="1.71" height="53.7"/><rect x="345.50" y="524.3" width="1.71" height="51.2"/><rect x="348.11" y="537.9" width="1.71" height="37.6"/><rect x="350.72" y="531.1" width="1.71" height="44.4"/><rect x="353.34" y="531.1" width="1.71" height="44.4"/><rect x="355.95" y="531.1" width="1.71" height="44.4"/><rect x="358.56" y="524.3" width="1.71" height="51.2"/><rect x="361.18" y="506.5" width="1.71" height="69.0"/><rect x="363.79" y="492.9" width="1.71" height="82.6"/><rect x="366.40" y="518.4" width="1.71" height="57.1"/><rect x="369.01" y="500.6" width="1.71" height="74.9"/><rect x="371.62" y="498.0" width="1.71" height="77.5"/><rect x="374.24" y="504.0" width="1.71" height="71.5"/><rect x="376.85" y="496.3" width="1.71" height="79.2"/><rect x="379.46" y="508.2" width="1.71" height="67.3"/><rect x="382.07" y="493.8" width="1.71" height="81.7"/><rect x="384.69" y="513.3" width="1.71" height="62.2"/><rect x="387.30" y="512.4" width="1.71" height="63.1"/><rect x="389.91" y="493.8" width="1.71" height="81.7"/><rect x="392.52" y="496.3" width="1.71" height="79.2"/><rect x="395.14" y="515.8" width="1.71" height="59.7"/><rect x="397.75" y="515.8" width="1.71" height="59.7"/><rect x="400.36" y="515.0" width="1.71" height="60.5"/><rect x="402.97" y="514.1" width="1.71" height="61.4"/><rect x="405.59" y="514.1" width="1.71" height="61.4"/><rect x="408.20" y="512.4" width="1.71" height="63.1"/><rect x="410.81" y="520.9" width="1.71" height="54.6"/><rect x="413.42" y="511.6" width="1.71" height="63.9"/><rect x="416.04" y="510.7" width="1.71" height="64.8"/><rect x="418.65" y="511.6" width="1.71" height="63.9"/><rect x="421.26" y="498.0" width="1.71" height="77.5"/><rect x="423.87" y="498.9" width="1.71" height="76.6"/><rect x="426.49" y="498.9" width="1.71" height="76.6"/><rect x="429.10" y="480.2" width="1.71" height="95.3"/><rect x="431.71" y="510.7" width="1.71" height="64.8"/><rect x="434.32" y="487.8" width="1.71" height="87.7"/><rect x="436.94" y="504.0" width="1.71" height="71.5"/><rect x="439.55" y="513.3" width="1.71" height="62.2"/><rect x="442.16" y="519.2" width="1.71" height="56.3"/><rect x="444.77" y="521.8" width="1.71" height="53.7"/><rect x="447.39" y="521.8" width="1.71" height="53.7"/><rect x="450.00" y="513.3" width="1.71" height="62.2"/><rect x="452.61" y="514.1" width="1.71" height="61.4"/><rect x="455.22" y="515.8" width="1.71" height="59.7"/><rect x="457.84" y="509.9" width="1.71" height="65.6"/><rect x="460.45" y="510.7" width="1.71" height="64.8"/><rect x="463.06" y="510.7" width="1.71" height="64.8"/><rect x="465.67" y="515.8" width="1.71" height="59.7"/><rect x="468.29" y="520.9" width="1.71" height="54.6"/><rect x="470.90" y="520.9" width="1.71" height="54.6"/><rect x="473.51" y="520.1" width="1.71" height="55.4"/><rect x="476.12" y="519.2" width="1.71" height="56.3"/><rect x="478.74" y="515.8" width="1.71" height="59.7"/><rect x="481.35" y="528.6" width="1.71" height="46.9"/><rect x="483.96" y="528.6" width="1.71" height="46.9"/><rect x="486.57" y="527.7" width="1.71" height="47.8"/><rect x="489.19" y="513.3" width="1.71" height="62.2"/><rect x="491.80" y="526.0" width="1.71" height="49.5"/><rect x="494.41" y="526.0" width="1.71" height="49.5"/><rect x="497.02" y="524.3" width="1.71" height="51.2"/><rect x="499.64" y="520.9" width="1.71" height="54.6"/><rect x="502.25" y="520.9" width="1.71" height="54.6"/><rect x="504.86" y="515.8" width="1.71" height="59.7"/><rect x="507.47" y="504.0" width="1.71" height="71.5"/><rect x="510.09" y="508.2" width="1.71" height="67.3"/><rect x="512.70" y="513.3" width="1.71" height="62.2"/><rect x="515.31" y="513.3" width="1.71" height="62.2"/><rect x="517.92" y="512.4" width="1.71" height="63.1"/><rect x="520.54" y="514.1" width="1.71" height="61.4"/><rect x="523.15" y="515.8" width="1.71" height="59.7"/><rect x="525.76" y="518.4" width="1.71" height="57.1"/><rect x="528.38" y="517.5" width="1.71" height="58.0"/><rect x="530.99" y="498.0" width="1.71" height="77.5"/><rect x="533.60" y="498.0" width="1.71" height="77.5"/><rect x="536.21" y="498.0" width="1.71" height="77.5"/><rect x="538.83" y="508.2" width="1.71" height="67.3"/><rect x="541.44" y="505.7" width="1.71" height="69.8"/><rect x="544.05" y="515.8" width="1.71" height="59.7"/><rect x="546.66" y="520.9" width="1.71" height="54.6"/><rect x="549.28" y="488.7" width="1.71" height="86.8"/><rect x="551.89" y="509.9" width="1.71" height="65.6"/><rect x="554.50" y="510.7" width="1.71" height="64.8"/><rect x="557.11" y="512.4" width="1.71" height="63.1"/><rect x="559.73" y="512.4" width="1.71" height="63.1"/><rect x="562.34" y="520.1" width="1.71" height="55.4"/><rect x="564.95" y="504.0" width="1.71" height="71.5"/><rect x="567.56" y="502.3" width="1.71" height="73.2"/><rect x="570.17" y="514.1" width="1.71" height="61.4"/><rect x="572.79" y="509.0" width="1.71" height="66.5"/><rect x="575.40" y="515.8" width="1.71" height="59.7"/><rect x="578.01" y="522.6" width="1.71" height="52.9"/><rect x="580.62" y="515.0" width="1.71" height="60.5"/><rect x="583.24" y="515.8" width="1.71" height="59.7"/><rect x="585.85" y="511.6" width="1.71" height="63.9"/><rect x="588.46" y="502.3" width="1.71" height="73.2"/><rect x="591.08" y="514.1" width="1.71" height="61.4"/><rect x="593.69" y="495.5" width="1.71" height="80.0"/><rect x="596.30" y="513.3" width="1.71" height="62.2"/><rect x="598.91" y="521.8" width="1.71" height="53.7"/><rect x="601.53" y="520.9" width="1.71" height="54.6"/><rect x="604.14" y="519.2" width="1.71" height="56.3"/><rect x="606.75" y="520.1" width="1.71" height="55.4"/><rect x="609.36" y="514.1" width="1.71" height="61.4"/><rect x="611.98" y="492.9" width="1.71" height="82.6"/><rect x="614.59" y="512.4" width="1.71" height="63.1"/><rect x="617.20" y="519.2" width="1.71" height="56.3"/><rect x="619.81" y="520.1" width="1.71" height="55.4"/><rect x="622.42" y="522.6" width="1.71" height="52.9"/><rect x="625.04" y="526.0" width="1.71" height="49.5"/><rect x="627.65" y="520.1" width="1.71" height="55.4"/><rect x="630.26" y="520.0" width="1.71" height="55.5"/><rect x="632.88" y="523.7" width="1.71" height="51.8"/><rect x="635.49" y="521.2" width="1.71" height="54.3"/><rect x="638.10" y="518.8" width="1.71" height="56.7"/><rect x="640.71" y="517.5" width="1.71" height="58.0"/><rect x="643.33" y="521.2" width="1.71" height="54.3"/><rect x="645.94" y="524.9" width="1.71" height="50.6"/><rect x="648.55" y="524.9" width="1.71" height="50.6"/><rect x="651.16" y="524.9" width="1.71" height="50.6"/><rect x="653.78" y="523.7" width="1.71" height="51.8"/><rect x="656.39" y="522.5" width="1.71" height="53.0"/><rect x="659.00" y="524.9" width="1.71" height="50.6"/><rect x="661.61" y="523.7" width="1.71" height="51.8"/><rect x="664.23" y="526.2" width="1.71" height="49.3"/><rect x="666.84" y="527.4" width="1.71" height="48.1"/><rect x="669.45" y="529.9" width="1.71" height="45.6"/><rect x="672.06" y="523.7" width="1.71" height="51.8"/><rect x="674.67" y="520.0" width="1.71" height="55.5"/><rect x="677.29" y="520.0" width="1.71" height="55.5"/><rect x="679.90" y="521.2" width="1.71" height="54.3"/><rect x="682.51" y="523.7" width="1.71" height="51.8"/><rect x="685.12" y="528.6" width="1.71" height="46.9"/><rect x="687.74" y="529.9" width="1.71" height="45.6"/><rect x="690.35" y="533.6" width="1.71" height="41.9"/><rect x="692.96" y="526.2" width="1.71" height="49.3"/><rect x="695.58" y="520.0" width="1.71" height="55.5"/><rect x="698.19" y="526.2" width="1.71" height="49.3"/><rect x="700.80" y="524.9" width="1.71" height="50.6"/><rect x="703.41" y="526.2" width="1.71" height="49.3"/><rect x="706.02" y="517.5" width="1.71" height="58.0"/><rect x="708.64" y="521.2" width="1.71" height="54.3"/><rect x="711.25" y="511.4" width="1.71" height="64.1"/><rect x="713.86" y="504.0" width="1.71" height="71.5"/><rect x="716.48" y="517.5" width="1.71" height="58.0"/><rect x="719.09" y="520.0" width="1.71" height="55.5"/><rect x="721.70" y="518.8" width="1.71" height="56.7"/><rect x="724.31" y="527.4" width="1.71" height="48.1"/><rect x="726.92" y="529.9" width="1.71" height="45.6"/><rect x="729.54" y="524.9" width="1.71" height="50.6"/><rect x="732.15" y="523.7" width="1.71" height="51.8"/><rect x="734.76" y="527.4" width="1.71" height="48.1"/><rect x="737.38" y="518.8" width="1.71" height="56.7"/><rect x="739.99" y="520.0" width="1.71" height="55.5"/><rect x="742.60" y="524.9" width="1.71" height="50.6"/><rect x="745.21" y="517.5" width="1.71" height="58.0"/><rect x="747.83" y="520.0" width="1.71" height="55.5"/><rect x="750.44" y="510.1" width="1.71" height="65.4"/><rect x="753.05" y="520.0" width="1.71" height="55.5"/><rect x="755.66" y="521.2" width="1.71" height="54.3"/><rect x="758.27" y="516.3" width="1.71" height="59.2"/><rect x="760.89" y="513.8" width="1.71" height="61.7"/><rect x="763.50" y="502.7" width="1.71" height="72.8"/><rect x="766.11" y="506.4" width="1.71" height="69.1"/><rect x="768.73" y="505.2" width="1.71" height="70.3"/><rect x="771.34" y="476.8" width="1.71" height="98.7"/><rect x="773.95" y="447.2" width="1.71" height="128.3"/><rect x="776.56" y="491.6" width="1.71" height="83.9"/><rect x="779.17" y="437.3" width="1.71" height="138.2"/><rect x="781.79" y="478.0" width="1.71" height="97.5"/><rect x="784.40" y="499.0" width="1.71" height="76.5"/><rect x="787.01" y="486.7" width="1.71" height="88.8"/><rect x="789.62" y="504.0" width="1.71" height="71.5"/><rect x="792.24" y="512.6" width="1.71" height="62.9"/><rect x="794.85" y="513.8" width="1.71" height="61.7"/><rect x="797.46" y="513.8" width="1.71" height="61.7"/><rect x="800.08" y="517.5" width="1.71" height="58.0"/><rect x="802.69" y="501.5" width="1.71" height="74.0"/><rect x="805.30" y="504.0" width="1.71" height="71.5"/><rect x="807.91" y="523.7" width="1.71" height="51.8"/><rect x="810.52" y="520.0" width="1.71" height="55.5"/><rect x="813.14" y="512.6" width="1.71" height="62.9"/><rect x="815.75" y="515.1" width="1.71" height="60.4"/><rect x="818.36" y="523.7" width="1.71" height="51.8"/><rect x="820.98" y="505.2" width="1.71" height="70.3"/><rect x="823.59" y="517.5" width="1.71" height="58.0"/><rect x="826.20" y="521.2" width="1.71" height="54.3"/><rect x="828.81" y="521.2" width="1.71" height="54.3"/><rect x="831.42" y="524.9" width="1.71" height="50.6"/><rect x="834.04" y="524.9" width="1.71" height="50.6"/><rect x="836.65" y="518.8" width="1.71" height="56.7"/><rect x="839.26" y="506.4" width="1.71" height="69.1"/><rect x="841.88" y="505.2" width="1.71" height="70.3"/><rect x="844.49" y="517.5" width="1.71" height="58.0"/><rect x="847.10" y="517.5" width="1.71" height="58.0"/><rect x="849.71" y="504.0" width="1.71" height="71.5"/><rect x="852.33" y="513.8" width="1.71" height="61.7"/><rect x="854.94" y="517.5" width="1.71" height="58.0"/><rect x="857.55" y="507.7" width="1.71" height="67.8"/><rect x="860.16" y="491.6" width="1.71" height="83.9"/><rect x="862.77" y="516.3" width="1.71" height="59.2"/><rect x="865.39" y="518.8" width="1.71" height="56.7"/><rect x="868.00" y="518.8" width="1.71" height="56.7"/><rect x="870.61" y="515.1" width="1.71" height="60.4"/><rect x="873.23" y="520.0" width="1.71" height="55.5"/><rect x="875.84" y="516.3" width="1.71" height="59.2"/><rect x="878.45" y="510.1" width="1.71" height="65.4"/><rect x="881.06" y="520.0" width="1.71" height="55.5"/><rect x="883.67" y="520.0" width="1.71" height="55.5"/><rect x="886.29" y="520.0" width="1.71" height="55.5"/><rect x="888.90" y="520.0" width="1.71" height="55.5"/><rect x="891.51" y="512.6" width="1.71" height="62.9"/><rect x="894.12" y="512.6" width="1.71" height="62.9"/><rect x="896.74" y="507.7" width="1.71" height="67.8"/><rect x="899.35" y="512.6" width="1.71" height="62.9"/><rect x="901.96" y="523.7" width="1.71" height="51.8"/><rect x="904.58" y="518.8" width="1.71" height="56.7"/><rect x="907.19" y="520.0" width="1.71" height="55.5"/><rect x="909.80" y="523.7" width="1.71" height="51.8"/><rect x="912.41" y="515.1" width="1.71" height="60.4"/><rect x="915.02" y="520.0" width="1.71" height="55.5"/><rect x="917.64" y="518.8" width="1.71" height="56.7"/><rect x="920.25" y="518.8" width="1.71" height="56.7"/><rect x="922.86" y="520.0" width="1.71" height="55.5"/><rect x="925.48" y="524.9" width="1.71" height="50.6"/><rect x="928.09" y="518.8" width="1.71" height="56.7"/><rect x="930.70" y="521.2" width="1.71" height="54.3"/><rect x="933.31" y="512.6" width="1.71" height="62.9"/><rect x="935.92" y="497.8" width="1.71" height="77.7"/><rect x="938.54" y="457.0" width="1.71" height="118.5"/><rect x="941.15" y="492.8" width="1.71" height="82.7"/><rect x="943.76" y="485.4" width="1.71" height="90.1"/><rect x="946.38" y="507.7" width="1.71" height="67.8"/><rect x="948.99" y="523.7" width="1.71" height="51.8"/><rect x="951.60" y="501.5" width="1.71" height="74.0"/><rect x="954.21" y="512.6" width="1.71" height="62.9"/><rect x="956.83" y="501.5" width="1.71" height="74.0"/><rect x="959.44" y="512.6" width="1.71" height="62.9"/><rect x="962.05" y="523.7" width="1.71" height="51.8"/><rect x="964.66" y="520.0" width="1.71" height="55.5"/><rect x="967.27" y="506.4" width="1.71" height="69.1"/><rect x="969.89" y="499.0" width="1.71" height="76.5"/><rect x="972.50" y="471.9" width="1.71" height="103.6"/><rect x="975.11" y="506.4" width="1.71" height="69.1"/><rect x="977.73" y="479.3" width="1.71" height="96.2"/><rect x="980.34" y="496.5" width="1.71" height="79.0"/><rect x="982.95" y="518.8" width="1.71" height="56.7"/><rect x="985.56" y="520.0" width="1.71" height="55.5"/><rect x="988.17" y="515.1" width="1.71" height="60.4"/><rect x="990.79" y="517.5" width="1.71" height="58.0"/><rect x="993.40" y="518.8" width="1.71" height="56.7"/><rect x="996.01" y="518.8" width="1.71" height="56.7"/><rect x="998.62" y="516.3" width="1.71" height="59.2"/><rect x="1001.24" y="521.2" width="1.71" height="54.3"/><rect x="1003.85" y="511.4" width="1.71" height="64.1"/><rect x="1006.46" y="512.6" width="1.71" height="62.9"/><rect x="1009.07" y="521.2" width="1.71" height="54.3"/><rect x="1011.69" y="520.0" width="1.71" height="55.5"/><rect x="1014.30" y="517.5" width="1.71" height="58.0"/><rect x="1016.91" y="523.7" width="1.71" height="51.8"/><rect x="1019.52" y="516.3" width="1.71" height="59.2"/><rect x="1022.14" y="494.1" width="1.71" height="81.4"/><rect x="1024.75" y="508.9" width="1.71" height="66.6"/><rect x="1027.36" y="510.1" width="1.71" height="65.4"/><rect x="1029.98" y="505.2" width="1.71" height="70.3"/><rect x="1032.59" y="516.3" width="1.71" height="59.2"/><rect x="1035.20" y="518.8" width="1.71" height="56.7"/><rect x="1037.81" y="513.8" width="1.71" height="61.7"/><rect x="1040.42" y="496.5" width="1.71" height="79.0"/><rect x="1043.04" y="499.0" width="1.71" height="76.5"/><rect x="1045.65" y="513.8" width="1.71" height="61.7"/><rect x="1048.26" y="511.4" width="1.71" height="64.1"/><rect x="1050.88" y="513.8" width="1.71" height="61.7"/><rect x="1053.49" y="517.5" width="1.71" height="58.0"/><rect x="1056.10" y="499.0" width="1.71" height="76.5"/><rect x="1058.71" y="504.0" width="1.71" height="71.5"/><rect x="1061.33" y="513.8" width="1.71" height="61.7"/><rect x="1063.94" y="520.0" width="1.71" height="55.5"/><rect x="1066.55" y="521.2" width="1.71" height="54.3"/><rect x="1069.16" y="516.3" width="1.71" height="59.2"/><rect x="1071.77" y="516.3" width="1.71" height="59.2"/><rect x="1074.39" y="529.9" width="1.71" height="45.6"/><rect x="1077.00" y="516.3" width="1.71" height="59.2"/><rect x="1079.61" y="528.6" width="1.71" height="46.9"/><rect x="1082.23" y="516.3" width="1.71" height="59.2"/><rect x="1084.84" y="526.2" width="1.71" height="49.3"/></g>
<path d="M146.7,570.9 L151.7,570.1 L156.7,569.7 L159.6,566.3 L164.2,564.3 L167.1,561.8 L170.0,565.1 L173.8,566.3 L177.9,568.4 L180.8,566.8 L185.8,567.2 L189.2,570.9 L195.8,573.8 L203.3,572.2 L206.7,569.7 L210.8,572.2 L215.0,571.8 L220.0,567.2 L223.3,563.8 L225.4,558.8 L232.5,556.8 L237.5,558.8 L240.0,557.2 L248.3,554.7 L251.3,557.6 L259.2,550.9 L266.7,551.3 L268.8,538.0 L271.7,538.4 L274.2,541.3 L280.8,542.2 L282.5,545.9 L284.2,542.6 L290.0,547.2 L296.7,544.7 L300.8,548.0 L303.3,540.5 L310.8,539.3 L317.5,541.8 L322.5,543.4 L328.3,535.5 L336.7,527.1 L340.0,527.1 L343.3,522.1 L349.2,522.9 L351.7,525.4 L355.0,532.2 L359.2,526.7 L364.2,531.3 L368.3,532.2 L374.2,533.8 L379.2,528.7 L382.5,525.0 L386.7,527.9 L393.3,519.6 L396.7,520.4 L400.8,525.4 L405.0,526.7 L408.3,523.3 L411.7,531.3 L420.8,529.7 L425.8,526.2 L429.2,514.6 L432.5,506.7 L435.0,507.9 L436.7,511.2 L440.0,510.4 L442.5,515.0 L447.1,508.3 L451.7,514.6 L456.7,515.0 L460.0,517.5 L464.2,528.7 L470.0,531.3 L475.0,527.9 L479.2,527.1 L482.9,523.3 L487.5,526.2 L498.3,526.2 L503.3,518.7 L509.2,514.6 L514.2,512.9 L517.5,504.6 L520.8,502.1 L524.2,493.7 L530.0,495.4 L536.1,483.2 L539.8,482.0 L546.6,485.7 L551.5,475.2 L554.6,469.6 L559.0,459.1 L562.0,459.8 L564.5,456.0 L568.8,454.2 L571.3,444.9 L575.6,444.9 L576.9,435.0 L580.0,428.8 L585.5,425.7 L588.0,426.3 L590.4,416.4 L592.9,420.1 L595.4,419.5 L599.1,429.4 L603.4,449.9 L605.9,443.7 L608.3,448.6 L611.4,471.5 L614.5,450.5 L619.4,462.2 L623.0,459.0 L627.5,446.0 L629.5,446.5 L632.0,450.5 L635.0,448.5 L638.6,451.0 L642.6,442.9 L644.6,447.5 L648.1,465.0 L652.1,462.0 L656.1,462.5 L660.1,456.0 L663.1,439.9 L666.1,450.5 L669.1,449.0 L672.2,453.0 L676.2,480.1 L679.2,473.5 L684.2,477.0 L687.2,483.1 L690.2,478.1 L695.2,473.0 L699.2,470.0 L702.2,469.0 L705.3,473.0 L710.3,473.5 L714.3,466.0 L718.7,471.0 L722.4,484.6 L727.3,478.4 L733.5,474.1 L739.7,480.9 L743.4,482.1 L748.3,488.3 L754.5,486.4 L757.6,489.5 L761.3,480.9 L764.4,478.4 L768.1,474.7 L770.6,477.8 L773.0,442.6 L775.5,433.8 L779.2,435.1 L783.5,437.0 L789.1,428.3 L791.5,427.1 L799.0,435.7 L803.9,432.0 L807.0,434.5 L812.5,429.5 L814.9,428.9 L817.4,432.0 L820.5,440.7 L825.4,438.9 L828.5,442.6 L830.4,450.0 L832.8,448.1 L835.9,453.7 L843.3,444.4 L848.3,452.5 L852.6,448.1 L858.1,451.2 L864.3,460.5 L868.0,458.6 L871.7,455.6 L875.4,459.3 L882.8,454.9 L886.5,458.6 L892.1,482.1 L895.2,479.6 L898.3,485.8 L905.1,476.5 L910.6,474.7 L915.4,469.2 L919.6,452.5 L924.4,458.7 L930.7,450.4 L934.9,449.7 L937.6,454.6 L940.4,453.2 L945.3,471.2 L948.8,466.4 L955.7,462.9 L963.3,469.8 L967.5,485.1 L970.3,492.1 L974.4,517.1 L978.6,521.2 L982.1,503.2 L985.6,507.3 L989.0,508.7 L992.5,499.7 L999.4,508.7 L1005.4,506.7 L1010.3,505.0 L1013.5,508.8 L1016.2,505.6 L1018.9,505.0 L1022.1,496.9 L1025.9,498.0 L1029.2,503.4 L1031.9,515.3 L1034.6,512.1 L1040.0,512.1 L1044.3,517.5 L1047.5,512.1 L1050.8,516.4 L1054.0,518.5 L1056.2,525.0 L1058.9,530.5 L1064.8,523.9 L1070.2,522.9 L1075.6,517.5 L1079.9,521.8 L1085.3,526.6 L1087.0,526.6" fill="none" stroke="#ffffff" stroke-opacity="0.49" stroke-width="2.8" stroke-linejoin="round" stroke-linecap="round"/>
<g font-family="Liberation Sans" font-size="13">
<text x="136.5" y="181.5" text-anchor="end" fill="#b4b6ba">4,500.00</text>
<text x="136.5" y="212.4" text-anchor="end" fill="#b4b6ba">4,000.00</text>
<text x="136.5" y="243.2" text-anchor="end" fill="#b4b6ba">3,500.00</text>
<text x="136.5" y="274.1" text-anchor="end" fill="#b4b6ba">3,000.00</text>
<text x="136.5" y="305.0" text-anchor="end" fill="#b4b6ba">2,500.00</text>
<text x="136.5" y="335.8" text-anchor="end" fill="#b4b6ba">2,000.00</text>
<text x="136.5" y="366.7" text-anchor="end" fill="#b4b6ba">1,500.00</text>
<text x="136.5" y="394.3" text-anchor="end" fill="#b4b6ba">4,500.00</text>
<text x="136.5" y="425.2" text-anchor="end" fill="#b4b6ba">4,000.00</text>
<text x="136.5" y="456.1" text-anchor="end" fill="#b4b6ba">3,500.00</text>
<text x="136.5" y="487.0" text-anchor="end" fill="#b4b6ba">3,000.00</text>
<text x="136.5" y="517.9" text-anchor="end" fill="#b4b6ba">2,500.00</text>
<text x="136.5" y="548.8" text-anchor="end" fill="#b4b6ba">2,000.00</text>
<text x="136.5" y="579.7" text-anchor="end" fill="#b4b6ba">1,500.00</text>
<text x="1096.7" y="181.5" fill="#2faa83">50.00</text>
<text x="1096.7" y="212.4" fill="#2faa83">40.00</text>
<text x="1096.7" y="243.2" fill="#2faa83">30.00</text>
<text x="1096.7" y="274.1" fill="#2faa83">20.00</text>
<text x="1096.7" y="305.0" fill="#2faa83">10.00</text>
<text x="1096.7" y="335.8" fill="#2faa83">0.00</text>
<text x="1096.7" y="366.7" fill="#d9505c">-10.00</text>
<text x="1096.7" y="394.3" fill="#3b6e93">30%</text>
<text x="1096.7" y="425.2" fill="#3b6e93">25%</text>
<text x="1096.7" y="456.1" fill="#3b6e93">20%</text>
<text x="1096.7" y="487.0" fill="#3b6e93">15%</text>
<text x="1096.7" y="517.9" fill="#3b6e93">10%</text>
<text x="1096.7" y="548.8" fill="#3b6e93">5%</text>
<text x="1096.7" y="579.7" fill="#3b6e93">0%</text>
<text x="175" y="382.5" text-anchor="middle" fill="#b4b6ba">Oct</text>
<text x="175" y="596.0" text-anchor="middle" fill="#b4b6ba">Oct</text>
<text x="245.8" y="382.5" text-anchor="middle" fill="#b4b6ba">Nov</text>
<text x="245.8" y="596.0" text-anchor="middle" fill="#b4b6ba">Nov</text>
<text x="324.2" y="382.5" text-anchor="middle" fill="#b4b6ba">Dec</text>
<text x="324.2" y="596.0" text-anchor="middle" fill="#b4b6ba">Dec</text>
<text x="405" y="382.5" text-anchor="middle" fill="#b4b6ba">2024</text>
<text x="405" y="596.0" text-anchor="middle" fill="#b4b6ba">2024</text>
<text x="486.2" y="382.5" text-anchor="middle" fill="#b4b6ba">Feb</text>
<text x="486.2" y="596.0" text-anchor="middle" fill="#b4b6ba">Feb</text>
<text x="561.6" y="382.5" text-anchor="middle" fill="#b4b6ba">Mar</text>
<text x="561.6" y="596.0" text-anchor="middle" fill="#b4b6ba">Mar</text>
<text x="643" y="382.5" text-anchor="middle" fill="#b4b6ba">Apr</text>
<text x="643" y="596.0" text-anchor="middle" fill="#b4b6ba">Apr</text>
<text x="720.6" y="382.5" text-anchor="middle" fill="#b4b6ba">May</text>
<text x="720.6" y="596.0" text-anchor="middle" fill="#b4b6ba">May</text>
<text x="801.6" y="382.5" text-anchor="middle" fill="#b4b6ba">Jun</text>
<text x="801.6" y="596.0" text-anchor="middle" fill="#b4b6ba">Jun</text>
<text x="880.2" y="382.5" text-anchor="middle" fill="#b4b6ba">Jul</text>
<text x="880.2" y="596.0" text-anchor="middle" fill="#b4b6ba">Jul</text>
<text x="961.2" y="382.5" text-anchor="middle" fill="#b4b6ba">Aug</text>
<text x="961.2" y="596.0" text-anchor="middle" fill="#b4b6ba">Aug</text>
<text x="1030.2" y="382.5" text-anchor="middle" fill="#b4b6ba">Sep</text>
<text x="1030.2" y="596.0" text-anchor="middle" fill="#b4b6ba">Sep</text>
</g>
<line x1="84.5" y1="145.8" x2="111.5" y2="145.8" stroke="#9a9ca1" stroke-width="3"/>
<circle cx="98" cy="145.8" r="6" fill="#a6a8ad"/>
<path d="M172.9,146 A6.3,6.3 0 0 1 185.5,146 Z" fill="#31c08e"/>
<path d="M172.9,146 A6.3,6.3 0 0 0 185.5,146 Z" fill="#d45562"/>
<rect x="166.5" y="144.8" width="25.5" height="1.3" fill="#2fb386"/>
<rect x="166.5" y="146.1" width="25.5" height="1.3" fill="#c44d58"/>
<rect x="166.5" y="145.6" width="25.5" height="0.9" fill="#a9b0ad" fill-opacity="0.8"/>
<rect x="327.6" y="139" width="26.4" height="14.6" rx="3" fill="#2d6a9b"/>
<g font-family="Liberation Sans" font-size="13" fill="#d3d4d7">
<text x="117.8" y="150.4" textLength="28.7" lengthAdjust="spacingAndGlyphs">Price</text>
<text x="197.8" y="150.4">Sentiment analytics</text>
<text x="360.3" y="150.4" textLength="59.6" lengthAdjust="spacingAndGlyphs">Mindshare</text>
</g>
<circle cx="260.0" cy="64.6" r="6.4" fill="none" stroke="#c9cacd" stroke-width="1.4"/>
<circle cx="260.0" cy="61.4" r="0.95" fill="#c9cacd"/>
<line x1="260.0" y1="63.6" x2="260.0" y2="68.2" stroke="#c9cacd" stroke-width="1.4"/>
<circle cx="498.6" cy="64.6" r="6.4" fill="none" stroke="#c9cacd" stroke-width="1.4"/>
<circle cx="498.6" cy="61.4" r="0.95" fill="#c9cacd"/>
<line x1="498.6" y1="63.6" x2="498.6" y2="68.2" stroke="#c9cacd" stroke-width="1.4"/>
<rect x="1050.2" y="54.9" width="9.6" height="10.3" rx="1.6" fill="none" stroke="#3ddba6" stroke-width="1.4"/>
<line x1="1050.2" y1="57.6" x2="1059.8" y2="57.6" stroke="#3ddba6" stroke-width="2"/>
<polyline points="1141,58.6 1143.8,61.4 1146.6,58.6" fill="none" stroke="#3ddba6" stroke-width="1.3" stroke-linecap="round" stroke-linejoin="round"/>
</svg>
</body></html>
